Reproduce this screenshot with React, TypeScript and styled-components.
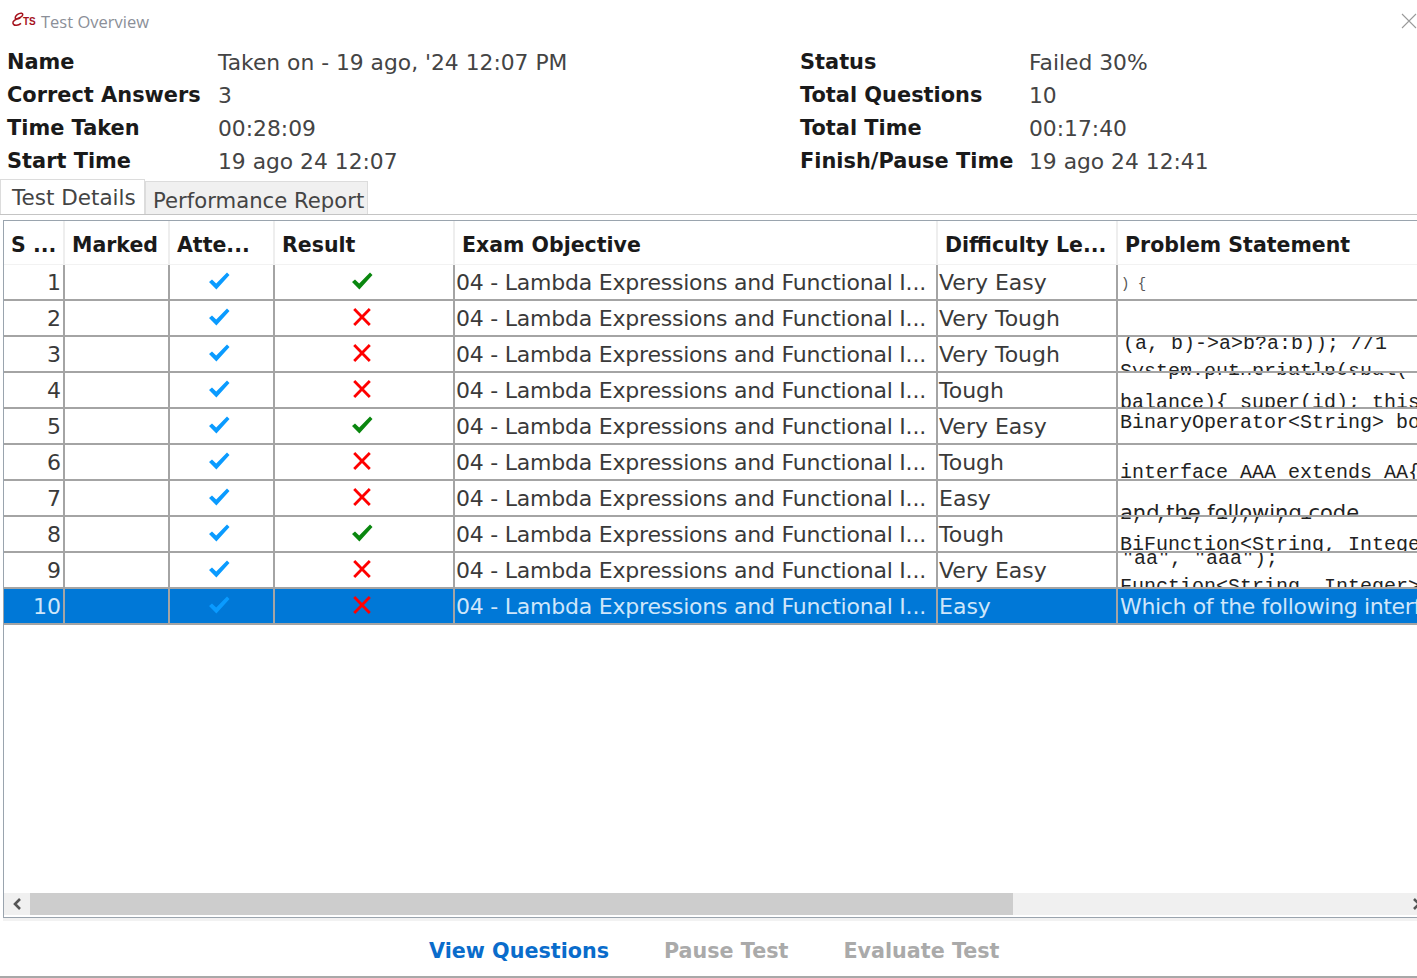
import styled, { createGlobalStyle } from "styled-components";

const GlobalStyle = createGlobalStyle`
  html, body {
    margin: 0;
    padding: 0;
    background: #fff;
    overflow: hidden;
  }
`;

type CodeText = { text: string; top: number; indent?: number; kind?: "mono" | "sans" | "small" };

type Row = {
  no: number;
  ok: boolean;
  level: string;
  code?: CodeText[];
};

const objective = "04 - Lambda Expressions and Functional I...";

const rows: Row[] = [
  { no: 1, ok: true, level: "Very Easy", code: [{ text: ") {", top: 9, indent: 1, kind: "small" }] },
  { no: 2, ok: false, level: "Very Tough" },
  {
    no: 3,
    ok: false,
    level: "Very Tough",
    code: [
      { text: "(a, b)->a>b?a:b)); //1", top: -3, indent: 3 },
      { text: "System.out.println(su", top: 8 },
    ],
  },
  {
    no: 4,
    ok: false,
    level: "Tough",
    code: [
      { text: "    pw.print balAcc.bal(", top: -13 },
      { text: "balance){ super(id); this", top: 13 },
    ],
  },
  { no: 5, ok: true, level: "Very Easy", code: [{ text: "BinaryOperator<String> bo", top: 4 }] },
  { no: 6, ok: false, level: "Tough", code: [{ text: "interface AAA extends AA{", top: 18 }] },
  { no: 7, ok: false, level: "Easy", code: [{ text: "and the following code", top: 22, kind: "sans" }] },
  {
    no: 8,
    ok: true,
    level: "Tough",
    code: [
      { text: "2, , 1, 1);, , 1", top: -13 },
      { text: "BiFunction<String, Intege", top: 11 },
    ],
  },
  {
    no: 9,
    ok: false,
    level: "Very Easy",
    code: [
      { text: '"aa", "aaa");', top: -4, indent: 2 },
      { text: "Function<String, Integer>", top: 8 },
    ],
  },
  { no: 10, ok: false, level: "Easy" },
];

const columns = "61px 105px 105px 180px 483px 180px 320px";

const App = () => {
  return (
    <Viewport>
      <GlobalStyle />
      <Window>
        <TitleBar>
          <Logo viewBox="0 0 26 16" aria-hidden="true">
            <path
              d="M9.5 5.4C8.6 7.2 4.6 7.6 4.2 6C4 4 7.6.8 10.6 1.3c1.8.4 1.2 2.2 0 3.2C8 6.6 3.6 7 2.2 9.6c-1 2.2.8 4 3.4 3.7 1.8-.2 3.2-1 4.4-2"
              fill="none"
              stroke="#a5121c"
              strokeWidth="1.5"
            />
            <text x="12" y="13" fontFamily="Liberation Sans, sans-serif" fontSize="10" fontWeight="700" fill="#a5121c">
              TS
            </text>
          </Logo>
          <Title>Test Overview</Title>
          <CloseIcon viewBox="0 0 16 16" aria-hidden="true">
            <path d="M1 1L15 15M15 1L1 15" stroke="#9a9a9a" strokeWidth="1.1" fill="none" />
          </CloseIcon>
        </TitleBar>

        <Summary>
          <Label>Name</Label>
          <Value>Taken on - 19 ago, '24 12:07 PM</Value>
          <Label>Status</Label>
          <Value>Failed 30%</Value>
          <Label>Correct Answers</Label>
          <Value>3</Value>
          <Label>Total Questions</Label>
          <Value>10</Value>
          <Label>Time Taken</Label>
          <Value>00:28:09</Value>
          <Label>Total Time</Label>
          <Value>00:17:40</Value>
          <Label>Start Time</Label>
          <Value>19 ago 24 12:07</Value>
          <Label>Finish/Pause Time</Label>
          <Value>19 ago 24 12:41</Value>
        </Summary>

        <Tabs>
          <Tab $active>Test Details</Tab>
          <Tab>Performance Report</Tab>
        </Tabs>

        <TableFrame>
          <HeadRow>
            <HeadCell>S ...</HeadCell>
            <HeadCell>Marked</HeadCell>
            <HeadCell>Atte...</HeadCell>
            <HeadCell>Result</HeadCell>
            <HeadCell>Exam Objective</HeadCell>
            <HeadCell>Difficulty Le...</HeadCell>
            <HeadCell>Problem Statement</HeadCell>
          </HeadRow>

          <Body>
            {rows.map((row) => {
              const selected = row.no === 10;
              return (
                <BodyRow key={row.no} $selected={selected}>
                  <NumberCell>{row.no}</NumberCell>
                  <Cell />
                  <IconCell $shift={5}>
                    <CheckIcon color="#0a9bff" />
                  </IconCell>
                  <IconCell $shift={4}>{row.ok ? <CheckIcon color="#0a870f" /> : <CrossIcon />}</IconCell>
                  <ObjectiveCell>{objective}</ObjectiveCell>
                  <TextCell>{row.level}</TextCell>
                  {selected ? (
                    <ObjectiveCell $wide>Which of the following interface</ObjectiveCell>
                  ) : (
                    <CodeCell>
                      {row.code?.map((line) => (
                        <CodeLine key={line.text} $top={line.top} $indent={line.indent ?? 0} $kind={line.kind ?? "mono"}>
                          {line.text}
                        </CodeLine>
                      ))}
                    </CodeCell>
                  )}
                </BodyRow>
              );
            })}
          </Body>

          <ScrollBar>
            <ScrollButton>
              <svg width="12" height="14" viewBox="0 0 12 14" aria-hidden="true">
                <path d="M9 2L4 7L9 12" fill="none" stroke="#555" strokeWidth="2.6" />
              </svg>
            </ScrollButton>
            <ScrollThumb />
            <ScrollTrack />
            <ScrollButton>
              <svg width="12" height="14" viewBox="0 0 12 14" aria-hidden="true">
                <path d="M3 2L8 7L3 12" fill="none" stroke="#555" strokeWidth="2.6" />
              </svg>
            </ScrollButton>
          </ScrollBar>
        </TableFrame>

        <Actions>
          <ActionLink $enabled>View Questions</ActionLink>
          <ActionLink>Pause Test</ActionLink>
          <ActionLink>Evaluate Test</ActionLink>
        </Actions>
        <WindowEdge />
      </Window>
    </Viewport>
  );
};

const CheckIcon = ({ color }: { color: string }) => (
  <svg width="22" height="18" viewBox="0 0 22 18" aria-hidden="true">
    <path d="M1 10L4 7.4L8.2 11.4L19 .5L21.5 3L8.4 17.5Z" fill={color} />
  </svg>
);

const CrossIcon = () => (
  <svg width="20" height="18" viewBox="0 0 20 18" aria-hidden="true">
    <path d="M2.2 1L17.8 17M17.8 1L2.2 17" stroke="#ff0000" strokeWidth="2.8" fill="none" />
  </svg>
);

export default App;

const Viewport = styled.div`
  width: 1417px;
  height: 978px;
  overflow: hidden;
  background: #fff;
`;

const Window = styled.div`
  width: 1430px;
  height: 978px;
  display: flex;
  flex-direction: column;
  font-family: "DejaVu Sans", sans-serif;
  color: #333;
`;

const TitleBar = styled.header`
  height: 46px;
  flex: none;
  display: flex;
  align-items: center;
  padding: 0 13px 0 11px;
  box-sizing: border-box;
`;

const Logo = styled.svg`
  width: 26px;
  height: 16px;
  margin-right: 4px;
  margin-top: -7px;
`;

const Title = styled.span`
  font-family: "Open Sans", sans-serif;
  font-size: 16.5px;
  color: #8b8f98;
  margin-top: -4px;
`;

const CloseIcon = styled.svg`
  width: 16px;
  height: 16px;
  margin-left: auto;
  margin-top: -4px;
`;

const Summary = styled.section`
  flex: none;
  display: grid;
  grid-template-columns: 211px 582px 229px 1fr;
  grid-auto-rows: 33px;
  height: 133px;
  padding-left: 7px;
`;

const Label = styled.div`
  font-size: 20.9px;
  font-weight: 700;
  color: #1a1a1a;
  line-height: 33px;
  white-space: nowrap;
`;

const Value = styled.div`
  font-size: 21.8px;
  color: #444;
  line-height: 33px;
  white-space: nowrap;
`;

const Tabs = styled.nav`
  height: 36px;
  flex: none;
  display: flex;
  align-items: flex-end;
  border-bottom: 1px solid #c4c4c4;
  box-sizing: border-box;
`;

const Tab = styled.div<{ $active?: boolean }>`
  box-sizing: border-box;
  height: ${(p) => (p.$active ? "35px" : "33px")};
  width: ${(p) => (p.$active ? "145px" : "223px")};
  font-size: ${(p) => (p.$active ? "21.5px" : "21.2px")};
  line-height: ${(p) => (p.$active ? "35px" : "38px")};
  padding-left: ${(p) => (p.$active ? "11px" : "7px")};
  white-space: nowrap;
  overflow: hidden;
  color: #444;
  background: ${(p) => (p.$active ? "#fff" : "#f0f0f0")};
  border: 1px solid #dcdcdc;
  border-bottom: none;
`;

const TableFrame = styled.section`
  flex: none;
  margin: 5px 0 0 3px;
  height: 698px;
  box-sizing: border-box;
  display: flex;
  flex-direction: column;
  border: 1px solid #9aa4ae;
  border-right: none;
  box-shadow: 0 3px 0 #f2f2f2;
`;

const HeadRow = styled.div`
  flex: none;
  height: 44px;
  display: grid;
  grid-template-columns: ${columns};
`;

const HeadCell = styled.div`
  box-sizing: border-box;
  font-size: 20.5px;
  font-weight: 700;
  color: #1a1a1a;
  line-height: 49px;
  padding-left: 7px;
  white-space: nowrap;
  overflow: hidden;
  border-right: 2px solid #eeeeee;
  border-bottom: 1px solid #f2f2f2;
`;

const Body = styled.div`
  flex: 1;
  min-height: 0;
  background: #fff;
`;

const BodyRow = styled.div<{ $selected?: boolean }>`
  height: 36px;
  box-sizing: border-box;
  display: grid;
  grid-template-columns: ${columns};
  border-bottom: 2px solid #a4a4a4;
  background: ${(p) => (p.$selected ? "#0078d7" : "#fff")};
  color: ${(p) => (p.$selected ? "#cfe6fa" : "#3a3a3a")};
`;

const Cell = styled.div`
  box-sizing: border-box;
  height: 34px;
  overflow: hidden;
  border-right: 2px solid #a4a4a4;
`;

const NumberCell = styled(Cell)`
  font-size: 22px;
  line-height: 36px;
  text-align: right;
  padding-right: 2px;
`;

const IconCell = styled(Cell)<{ $shift: number }>`
  display: flex;
  align-items: center;
  justify-content: center;
  padding-bottom: 2px;
  padding-right: ${(p) => p.$shift}px;
`;

const TextCell = styled(Cell)`
  font-size: 22px;
  line-height: 36px;
  padding-left: 1px;
  white-space: nowrap;
`;

const ObjectiveCell = styled(TextCell)<{ $wide?: boolean }>`
  letter-spacing: ${(p) => (p.$wide ? "-0.35px" : "-0.22px")};
  padding-left: ${(p) => (p.$wide ? "2px" : "1px")};
  border-right: ${(p) => (p.$wide ? "none" : "2px solid #a4a4a4")};
`;

const CodeCell = styled(Cell)`
  display: flex;
  flex-direction: column;
  border-right: none;
  padding-left: 2px;
`;

const codeFonts = {
  mono: `font-family: "Liberation Mono", monospace; font-size: 20px;`,
  sans: `font-family: "DejaVu Sans", sans-serif; font-size: 21px;`,
  small: `font-family: "Liberation Mono", monospace; font-size: 14px; color: #555;`,
};

const CodeLine = styled.div<{ $top: number; $indent: number; $kind: "mono" | "sans" | "small" }>`
  flex: none;
  line-height: 20px;
  white-space: pre;
  color: #222;
  ${(p) => codeFonts[p.$kind]}
  margin-top: ${(p) => p.$top}px;
  margin-left: ${(p) => p.$indent}px;
`;

const ScrollBar = styled.div`
  flex: none;
  height: 22px;
  display: flex;
  background: #f0f0f0;
  margin-bottom: 2px;
`;

const ScrollButton = styled.div`
  flex: none;
  width: 26px;
  display: flex;
  align-items: center;
  justify-content: center;
`;

const ScrollThumb = styled.div`
  flex: none;
  width: 983px;
  background: #cdcdcd;
`;

const ScrollTrack = styled.div`
  flex: 1;
`;

const Actions = styled.footer`
  flex: 1;
  display: flex;
  align-items: center;
  padding: 8px 0 0 429px;
  gap: 55px;
`;

const ActionLink = styled.button<{ $enabled?: boolean }>`
  border: none;
  background: none;
  padding: 0;
  font-family: "DejaVu Sans", sans-serif;
  font-size: 20.7px;
  font-weight: 700;
  color: ${(p) => (p.$enabled ? "#0a6ccb" : "#aaaaaa")};
`;

const WindowEdge = styled.div`
  flex: none;
  height: 2px;
  background: #a8a8a8;
`;
